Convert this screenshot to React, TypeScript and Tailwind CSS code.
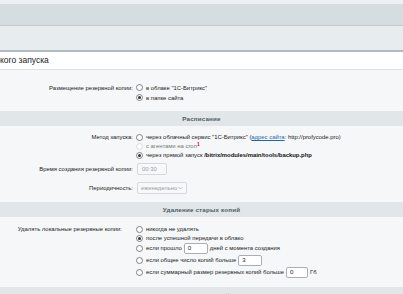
import React from 'react';

const Radio = ({ checked = false, disabled = false }: { checked?: boolean; disabled?: boolean }) => (
  <span
    className={`inline-flex items-center justify-center w-[7px] h-[7px] rounded-full border shrink-0 bg-white mr-[3px] ${
      disabled ? 'border-[#d9dcde]' : 'border-[#7d8387]'
    }`}
  >
    {checked && <span className="w-[3px] h-[3px] rounded-full bg-[#333]" />}
  </span>
);

const Field = ({ value, w }: { value: string; w: string }) => (
  <span
    className={`inline-flex items-center h-[11px] px-[3px] mx-[2px] bg-white border border-[#a9b0b4] rounded-[2px] text-[6px] text-[#222] ${w}`}
  >
    {value}
  </span>
);

const SectionHead = ({ title }: { title: string }) => (
  <div className="h-[15px] bg-[#e1e6e9] flex items-center justify-center text-[6.2px] font-bold text-[#4f5b61] tracking-[0.2px]">
    {title}
  </div>
);

export default function App() {
  return (
    <div className="w-[403px] h-[294px] overflow-hidden bg-[#f5f7f8] font-['Liberation_Sans',Arial,sans-serif] text-[#222]">
      <div className="h-[4px] bg-[#eef1f3]" />
      <div className="h-[22px] bg-[#d6dde0] border-b border-[#c3cbcf]" />
      <div className="h-[26px] bg-[#e7ecee] border-b-2 border-[#b3babd]" />
      <div className="h-[18px] bg-white border-b border-[#dde3e6] flex items-center text-[8.5px] text-[#222]">
        кого запуска
      </div>

      {/* размещение */}
      <div className="h-[41px] pt-[13px] text-[5.9px]">
        <div className="flex h-[10px] items-center">
          <div className="w-[136px] text-right pr-[3px]">Размещение резервной копии:</div>
          <div className="flex items-center">
            <Radio />в облаке "1С-Битрикс"
          </div>
        </div>
        <div className="flex h-[10px] items-center">
          <div className="w-[136px]" />
          <div className="flex items-center">
            <Radio checked />в папке сайта
          </div>
        </div>
      </div>

      <SectionHead title="Расписание" />

      <div className="h-[76px] pt-[7px] text-[5.9px]">
        <div className="flex">
          <div className="w-[136px] text-right pr-[3px] leading-[9px]">Метод запуска:</div>
          <div className="flex flex-col">
            <div className="flex h-[9px] items-center">
              <Radio />
              через облачный сервис "1С-Битрикс" (
              <span className="text-[#2067b0] underline">адрес сайта</span>: http://profycode.pro)
            </div>
            <div className="flex h-[9px] items-center text-[#777]">
              <Radio disabled />с агентами на cron
              <sup className="text-[#d0021b] text-[5px] font-bold">1</sup>
            </div>
            <div className="flex h-[9px] items-center">
              <Radio checked />
              через прямой запуск&nbsp;
              <span className="font-bold text-[#111]">/bitrix/modules/main/tools/backup.php</span>
            </div>
          </div>
        </div>
        <div className="flex items-center mt-[3px] h-[12px]">
          <div className="w-[136px] text-right pr-[3px]">Время создания резервной копии:</div>
          <span className="inline-flex items-center h-[12px] w-[30px] px-[4px] border border-[#d4d9dc] bg-[#f7f8f9] rounded-[2px] text-[#9aa0a4] ml-[1px]">
            00:30
          </span>
        </div>
        <div className="flex items-center mt-[7px] h-[12px]">
          <div className="w-[136px] text-right pr-[3px]">Периодичность:</div>
          <span className="inline-flex items-center justify-between h-[12px] w-[50px] px-[3px] border border-[#d4d9dc] bg-[#f7f8f9] rounded-[2px] text-[#9aa0a4] ml-[1px]">
            еженедельно
            <svg width="5" height="4" viewBox="0 0 5 4" className="shrink-0">
              <path d="M0.5 1 L2.5 3 L4.5 1" fill="none" stroke="#b0b5b8" strokeWidth="0.8" />
            </svg>
          </span>
        </div>
      </div>

      <SectionHead title="Удаление старых копий" />

      <div className="h-[70px] pt-[8px] text-[5.9px]">
        <div className="flex">
          <div className="w-[136px] text-right pr-[14px] leading-[9px]">Удалять локальные резервные копии:</div>
          <div className="flex flex-col">
            <div className="flex h-[9px] items-center">
              <Radio />никогда не удалять
            </div>
            <div className="flex h-[8px] items-center">
              <Radio checked />после успешной передачи в облако
            </div>
            <div className="flex h-[12px] items-center">
              <Radio />если прошло
              <Field value="0" w="w-[24px]" />
              дней с момента создания
            </div>
            <div className="flex h-[12px] items-center">
              <Radio />если общее число копий больше
              <Field value="3" w="w-[24px]" />
            </div>
            <div className="flex h-[12px] items-center">
              <Radio />если суммарный размер резервных копий больше
              <Field value="0" w="w-[22px]" />
              Гб
            </div>
          </div>
        </div>
      </div>

      <div className="h-[15px] bg-[#e1e6e9] flex justify-center pt-[4px] text-[6.2px] font-bold text-[#4f5b61] tracking-[0.2px]">
        Содержимое резервной копии
      </div>
    </div>
  );
}
